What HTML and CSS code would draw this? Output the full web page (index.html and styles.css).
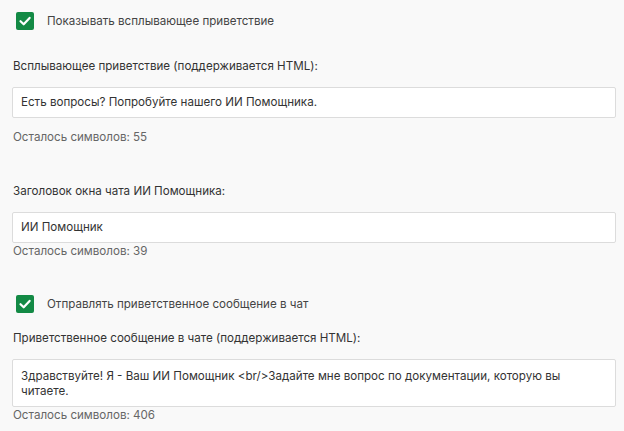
FILE: index.html
```html
<!DOCTYPE html>
<html lang="ru">
<head>
<meta charset="utf-8">
<link rel="stylesheet" href="styles.css">
</head>
<body>
<div class="page">
  <label class="check check-first">
    <span class="box"><svg viewBox="0 0 18 18" width="18" height="18"><path d="M4.5 9.2 L7.7 12.3 L13.6 5.9" fill="none" stroke="#fff" stroke-width="2.2" stroke-linecap="round" stroke-linejoin="round"/></svg></span>
    <span class="check-label">Показывать всплывающее приветствие</span>
  </label>

  <div class="field-label label-1">Всплывающее приветствие (поддерживается HTML):</div>
  <div class="input">Есть вопросы? Попробуйте нашего ИИ Помощника.</div>
  <div class="hint hint-1">Осталось символов: 55</div>

  <div class="field-label label-2">Заголовок окна чата ИИ Помощника:</div>
  <div class="input">ИИ Помощник</div>
  <div class="hint hint-2">Осталось символов: 39</div>

  <label class="check check-second">
    <span class="box"><svg viewBox="0 0 18 18" width="18" height="18"><path d="M4.5 9.2 L7.7 12.3 L13.6 5.9" fill="none" stroke="#fff" stroke-width="2.2" stroke-linecap="round" stroke-linejoin="round"/></svg></span>
    <span class="check-label">Отправлять приветственное сообщение в чат</span>
  </label>

  <div class="field-label label-3">Приветственное сообщение в чате (поддерживается HTML):</div>
  <div class="textarea">Здравствуйте! Я - Ваш ИИ Помощник &lt;br/&gt;Задайте мне вопрос по документации, которую вы читаете.</div>
  <div class="hint hint-3">Осталось символов: 406</div>
</div>
</body>
</html>
```

FILE: styles.css
```css
html, body {
  margin: 0;
  padding: 0;
  background: #f9f9f9;
}
body {
  font-family: Inter, "Noto Sans", sans-serif;
  font-size: 11.6px;
  color: #333;
  width: 624px;
  height: 431px;
  overflow: hidden;
}
.page {
  padding: 12px 8px 0 12px;
  display: flex;
  flex-direction: column;
}
.check {
  display: flex;
  align-items: center;
  gap: 13px;
  padding-left: 4px;
  height: 18px;
}
.box {
  width: 18px;
  height: 18px;
  border-radius: 2px;
  background: #138a45;
  display: flex;
}
.check-label {
  color: #444;
  line-height: 18px;
}
.field-label {
  padding-left: 1px;
  line-height: 16px;
  color: #333;
}
.label-1 { margin-top: 28px; }
.label-2 { margin-top: 38px; }
.label-3 { margin-top: 17px; }
.input, .textarea {
  background: #fff;
  border: 1px solid #dcdcdc;
  border-radius: 2px;
  padding: 0 8px;
  color: #333;
  box-sizing: border-box;
}
.input {
  margin-top: 13px;
  height: 31px;
  line-height: 29px;
}
.textarea {
  margin-top: 13px;
  height: 48px;
  padding: 9px 8px 0 8px;
  line-height: 15px;
}
.hint {
  color: #666;
  padding-left: 1px;
  line-height: 16px;
}
.hint-1 { margin-top: 11px; }
.hint-2 { margin-top: 0; }
.hint-3 { margin-top: 0; }
.check-second { margin-top: 36px; }
```
